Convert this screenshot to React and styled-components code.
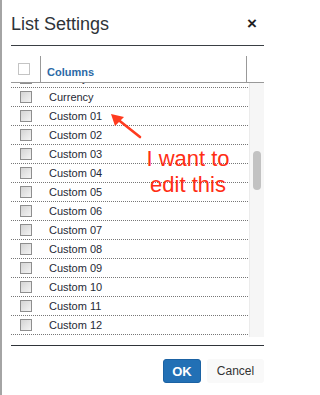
import { useLayoutEffect, useRef } from "react";
import styled, { createGlobalStyle } from "styled-components";

const GlobalStyle = createGlobalStyle`
  html, body {
    margin: 0;
    padding: 0;
    background: #fff;
  }
  body {
    font-family: "Liberation Sans", Arial, sans-serif;
  }
`;

const columns = [
  "Account",
  "Amount",
  "Category",
  "Country",
  "Currency",
  "Custom 01",
  "Custom 02",
  "Custom 03",
  "Custom 04",
  "Custom 05",
  "Custom 06",
  "Custom 07",
  "Custom 08",
  "Custom 09",
  "Custom 10",
  "Custom 11",
  "Custom 12",
  "Custom 13",
  "Custom 14",
];

const App = () => {
  const listRef = useRef(null);

  useLayoutEffect(() => {
    // scrolled so that "Currency" sits just under the header
    if (listRef.current) listRef.current.scrollTop = 71;
  }, []);

  return (
    <Dialog>
      <GlobalStyle />
      <Header>
        <Title>List Settings</Title>
        <Close>×</Close>
      </Header>

      <TableHead>
        <CheckCell>
          <Check $light />
        </CheckCell>
        <HeadLabel>Columns</HeadLabel>
        <HeadSpacer />
      </TableHead>

      <Body>
        <List ref={listRef}>
          {columns.map((name) => (
            <Row key={name}>
              <Check />
              <RowLabel>{name}</RowLabel>
            </Row>
          ))}
        </List>
        <Track>
          <Thumb />
        </Track>
      </Body>

      <Footer>
        <OkButton>OK</OkButton>
        <CancelButton>Cancel</CancelButton>
      </Footer>

      <Note>
        <svg width="40" height="30" viewBox="0 0 40 30">
          <line
            x1="30"
            y1="24"
            x2="6"
            y2="5"
            stroke="#ff3b1f"
            strokeWidth="2.6"
            strokeLinecap="round"
          />
          <polygon points="1,1 14,4 5,13" fill="#ff3b1f" />
        </svg>
      </Note>
      <NoteText>
        I want to
        <br />
        edit this
      </NoteText>
    </Dialog>
  );
};

export default App;

const Dialog = styled.div`
  position: relative;
  width: 272px;
  height: 395px;
  box-sizing: border-box;
  border-left: 2px solid #a4a4a4;
  padding: 0 8px 0 9px;
  background: #fff;
  overflow: hidden;
`;

const Header = styled.header`
  display: flex;
  align-items: center;
  justify-content: space-between;
  height: 46px;
  padding-top: 3px;
  box-sizing: border-box;
  border-bottom: 1px solid #3a3f44;
`;

const Title = styled.h1`
  margin: 0;
  font-size: 18px;
  font-weight: normal;
  color: #2e3338;
  line-height: 18px;
`;

const Close = styled.span`
  font-size: 17px;
  font-weight: bold;
  color: #222;
  line-height: 14px;
  margin-right: 7px;
  cursor: pointer;
`;

const TableHead = styled.div`
  display: flex;
  align-items: stretch;
  height: 37px;
  padding-top: 10px;
  box-sizing: border-box;
  border-bottom: 1px solid #999;
`;

const CheckCell = styled.div`
  width: 30px;
  flex-shrink: 0;
  display: flex;
  align-items: center;
  padding-left: 7px;
  box-sizing: border-box;
  border-right: 1px solid #999;
`;

const HeadLabel = styled.div`
  flex: 1;
  display: flex;
  align-items: center;
  padding: 6px 0 0 6px;
  font-size: 11px;
  font-weight: bold;
  color: #2c6aa6;
  border-right: 1px solid #999;
`;

const HeadSpacer = styled.div`
  width: 17px;
  flex-shrink: 0;
`;

const Check = styled.span`
  display: inline-block;
  width: 12px;
  height: 12px;
  box-sizing: border-box;
  flex-shrink: 0;
  border: ${(p) => (p.$light ? "1px solid #c4c4c4" : "1px solid #8e8e8e")};
  background: ${(p) =>
    p.$light ? "#fff" : "linear-gradient(135deg, #d4d4d4, #f4f4f4)"};
`;

const Body = styled.div`
  display: flex;
  height: 254px;
`;

const List = styled.div`
  width: 237px;
  overflow: hidden;
`;

const Row = styled.div`
  display: flex;
  align-items: center;
  gap: 17px;
  height: 19px;
  box-sizing: border-box;
  padding-left: 9px;
  border-bottom: 1px dotted #777;
`;

const RowLabel = styled.span`
  font-size: 11px;
  color: #1f2a36;
`;

const Track = styled.div`
  width: 15px;
  margin-left: 1px;
  background: #f6f6f6;
  border-left: 1px solid #ebebeb;
  display: flex;
  justify-content: center;
  padding-top: 68px;
  box-sizing: border-box;
`;

const Thumb = styled.div`
  width: 8px;
  height: 39px;
  border-radius: 4px;
  background: #c2c2c2;
`;

const Footer = styled.footer`
  margin-top: 8px;
  border-top: 1px solid #2f3439;
  display: flex;
  justify-content: flex-end;
  gap: 6px;
  padding-top: 13px;
`;

const OkButton = styled.button`
  width: 38px;
  height: 24px;
  padding: 0;
  border: 1px solid #1b62a3;
  border-radius: 3px;
  background: #2270b5;
  color: #fff;
  font-family: "Liberation Sans", Arial, sans-serif;
  font-size: 13px;
  font-weight: bold;
`;

const CancelButton = styled.button`
  width: 57px;
  height: 24px;
  padding: 0;
  border: none;
  border-radius: 3px;
  background: #f9f9f9;
  color: #333;
  font-family: "Liberation Sans", Arial, sans-serif;
  font-size: 12px;
`;

const Note = styled.div`
  position: absolute;
  left: 108px;
  top: 113px;
  line-height: 0;
  pointer-events: none;
`;

const NoteText = styled.div`
  position: absolute;
  left: 136px;
  top: 146px;
  width: 100px;
  text-align: center;
  font-size: 22px;
  line-height: 26px;
  color: #ff2d14;
  pointer-events: none;
`;
